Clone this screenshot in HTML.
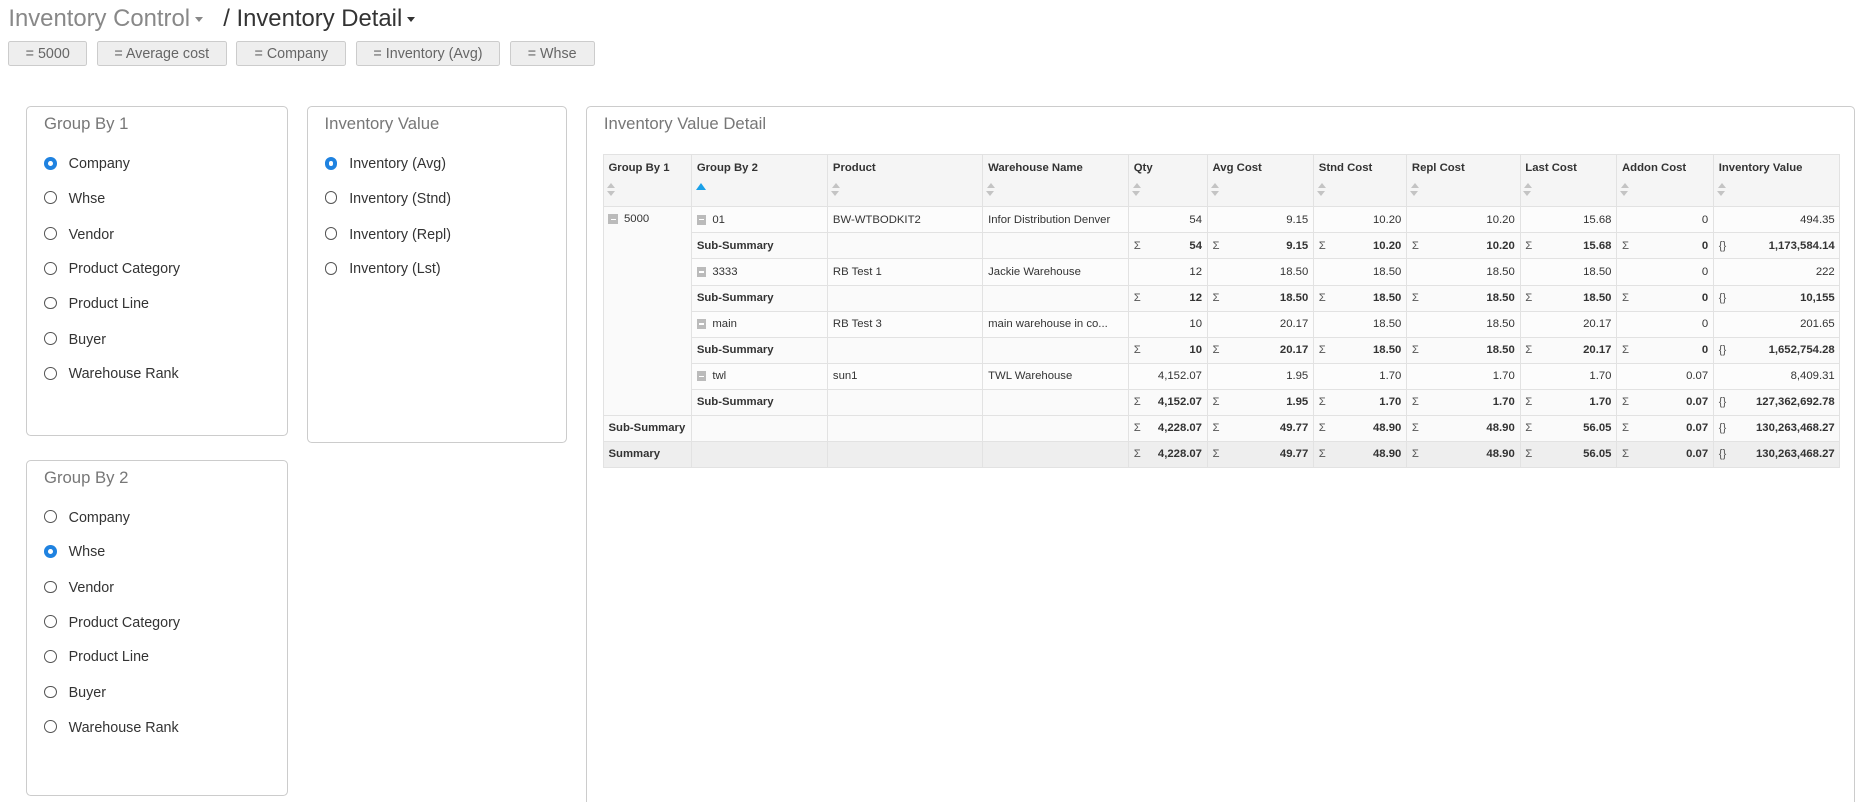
<!DOCTYPE html>
<html><head><meta charset="utf-8"><style>
html{zoom:1.19388;overflow:hidden}
body{margin:0;background:#fff;font-family:"Liberation Sans",sans-serif}
#w{width:1568px;height:672px;overflow:hidden;position:relative}
.bc{position:absolute;left:7px;top:4px;font-size:20px;color:#888;white-space:nowrap}
.bc .d{color:#333}
.car{display:inline-block;width:0;height:0;border-left:4px solid transparent;border-right:4px solid transparent;border-top:5px solid #888;vertical-align:middle;margin:0 6px 0 4px}
.bc .d .car{border-top-color:#333}
.btn{position:absolute;top:34px;height:21px;border:1px solid #ccc;background:#eee;border-radius:2px;color:#666;font-size:12px;line-height:21px;text-align:center;box-sizing:border-box}
.pan{position:absolute;border:1px solid #ccc;border-radius:4px;box-sizing:border-box;background:#fff}
.pan .t{position:absolute;left:14px;top:6px;font-size:14px;color:#777}
.r{position:absolute;left:14px;font-size:12px;color:#333;height:14px;line-height:14px;white-space:nowrap}
.r i{display:inline-block;width:9px;height:9px;border:1.5px solid #555;border-radius:50%;vertical-align:middle;margin:-2px 10px 0 0}
.r i.on{border:4px solid #1f82e0;width:4px;height:4px;background:#fff}
table{position:absolute;left:13px;top:39px;border-collapse:collapse;font-size:9.5px;color:#333;table-layout:fixed}
td,th{border:1px solid #e2e2e2;padding:0 4px;height:21px;white-space:nowrap;overflow:hidden}
th{background:#f5f5f5;text-align:left;vertical-align:top;height:44px;padding-top:6px;font-weight:bold;box-sizing:border-box;position:relative}
th .s{position:absolute;left:3px;top:24px;width:0;height:0;border-left:4px solid transparent;border-right:4px solid transparent;border-bottom:5px solid #c4c4c4}
th .s:after{content:"";position:absolute;left:-4px;top:6px;border-left:4px solid transparent;border-right:4px solid transparent;border-top:5px solid #c4c4c4}
th .s.b{border-left-width:5px;border-right-width:5px;border-bottom:6px solid #1aa0e8}th .s.b:after{display:none}
td{background:#fcfcfc}
td.n{text-align:right}
tr.sub td{font-weight:bold;background:#fafafa}
tr.sum td{font-weight:bold;background:#eee}
.g{display:inline-block;width:8px;height:8px;background:#bbb;vertical-align:top;margin:1px 5px 0 0;position:relative}
.g:after{content:"";position:absolute;left:2px;top:3.5px;width:4px;height:1px;background:#fff}
.sg{float:left;font-weight:normal;color:#555}
</style></head><body><div id="w">
<div class="bc">Inventory Control<span class="car"></span> <span class="d">&nbsp;/ Inventory Detail<span class="car"></span></span></div>
<div class="btn" style="left:7px;width:66px">= 5000</div>
<div class="btn" style="left:81px;width:109px">= Average cost</div>
<div class="btn" style="left:198px;width:92px">= Company</div>
<div class="btn" style="left:298px;width:121px">= Inventory (Avg)</div>
<div class="btn" style="left:427px;width:71px">= Whse</div>

<div class="pan" style="left:22px;top:89px;width:219px;height:276px"><div class="t">Group By 1</div>
<div class="r" style="top:41px"><i class="on"></i>Company</div>
<div class="r" style="top:70px"><i></i>Whse</div>
<div class="r" style="top:100px"><i></i>Vendor</div>
<div class="r" style="top:129px"><i></i>Product Category</div>
<div class="r" style="top:158px"><i></i>Product Line</div>
<div class="r" style="top:188px"><i></i>Buyer</div>
<div class="r" style="top:217px"><i></i>Warehouse Rank</div>
</div>
<div class="pan" style="left:22px;top:385px;width:219px;height:282px"><div class="t">Group By 2</div>
<div class="r" style="top:41px"><i></i>Company</div>
<div class="r" style="top:70px"><i class="on"></i>Whse</div>
<div class="r" style="top:100px"><i></i>Vendor</div>
<div class="r" style="top:129px"><i></i>Product Category</div>
<div class="r" style="top:158px"><i></i>Product Line</div>
<div class="r" style="top:188px"><i></i>Buyer</div>
<div class="r" style="top:217px"><i></i>Warehouse Rank</div>
</div>
<div class="pan" style="left:257px;top:89px;width:218px;height:282px"><div class="t">Inventory Value</div>
<div class="r" style="top:41px"><i class="on"></i>Inventory (Avg)</div>
<div class="r" style="top:70px"><i></i>Inventory (Stnd)</div>
<div class="r" style="top:100px"><i></i>Inventory (Repl)</div>
<div class="r" style="top:129px"><i></i>Inventory (Lst)</div>
</div>
<div class="pan" style="left:491px;top:89px;width:1063px;height:584px;border-bottom:none;border-radius:4px 4px 0 0"><div class="t">Inventory Value Detail</div>
<table>
<colgroup><col style="width:74px"><col style="width:114px"><col style="width:130px"><col style="width:122px"><col style="width:66px"><col style="width:89px"><col style="width:78px"><col style="width:95px"><col style="width:81px"><col style="width:81px"><col style="width:106px"></colgroup>
<tr><th>Group By 1<span class="s"></span></th><th>Group By 2<span class="s b"></span></th><th>Product<span class="s"></span></th><th>Warehouse Name<span class="s"></span></th><th>Qty<span class="s"></span></th><th>Avg Cost<span class="s"></span></th><th>Stnd Cost<span class="s"></span></th><th>Repl Cost<span class="s"></span></th><th>Last Cost<span class="s"></span></th><th>Addon Cost<span class="s"></span></th><th>Inventory Value<span class="s"></span></th></tr>
<tr><td rowspan="8" style="vertical-align:top;padding-top:5px;background:#fafafa"><span class="g"></span>5000</td><td><span class="g"></span>01</td><td>BW-WTBODKIT2</td><td>Infor Distribution Denver</td><td class="n">54</td><td class="n">9.15</td><td class="n">10.20</td><td class="n">10.20</td><td class="n">15.68</td><td class="n">0</td><td class="n">494.35</td></tr>
<tr class="sub"><td>Sub-Summary</td><td></td><td></td><td class="n"><span class="sg">Σ</span>54</td><td class="n"><span class="sg">Σ</span>9.15</td><td class="n"><span class="sg">Σ</span>10.20</td><td class="n"><span class="sg">Σ</span>10.20</td><td class="n"><span class="sg">Σ</span>15.68</td><td class="n"><span class="sg">Σ</span>0</td><td class="n"><span class="sg">{}</span>1,173,584.14</td></tr>
<tr><td><span class="g"></span>3333</td><td>RB Test 1</td><td>Jackie Warehouse</td><td class="n">12</td><td class="n">18.50</td><td class="n">18.50</td><td class="n">18.50</td><td class="n">18.50</td><td class="n">0</td><td class="n">222</td></tr>
<tr class="sub"><td>Sub-Summary</td><td></td><td></td><td class="n"><span class="sg">Σ</span>12</td><td class="n"><span class="sg">Σ</span>18.50</td><td class="n"><span class="sg">Σ</span>18.50</td><td class="n"><span class="sg">Σ</span>18.50</td><td class="n"><span class="sg">Σ</span>18.50</td><td class="n"><span class="sg">Σ</span>0</td><td class="n"><span class="sg">{}</span>10,155</td></tr>
<tr><td><span class="g"></span>main</td><td>RB Test 3</td><td>main warehouse in co...</td><td class="n">10</td><td class="n">20.17</td><td class="n">18.50</td><td class="n">18.50</td><td class="n">20.17</td><td class="n">0</td><td class="n">201.65</td></tr>
<tr class="sub"><td>Sub-Summary</td><td></td><td></td><td class="n"><span class="sg">Σ</span>10</td><td class="n"><span class="sg">Σ</span>20.17</td><td class="n"><span class="sg">Σ</span>18.50</td><td class="n"><span class="sg">Σ</span>18.50</td><td class="n"><span class="sg">Σ</span>20.17</td><td class="n"><span class="sg">Σ</span>0</td><td class="n"><span class="sg">{}</span>1,652,754.28</td></tr>
<tr><td><span class="g"></span>twl</td><td>sun1</td><td>TWL Warehouse</td><td class="n">4,152.07</td><td class="n">1.95</td><td class="n">1.70</td><td class="n">1.70</td><td class="n">1.70</td><td class="n">0.07</td><td class="n">8,409.31</td></tr>
<tr class="sub"><td>Sub-Summary</td><td></td><td></td><td class="n"><span class="sg">Σ</span>4,152.07</td><td class="n"><span class="sg">Σ</span>1.95</td><td class="n"><span class="sg">Σ</span>1.70</td><td class="n"><span class="sg">Σ</span>1.70</td><td class="n"><span class="sg">Σ</span>1.70</td><td class="n"><span class="sg">Σ</span>0.07</td><td class="n"><span class="sg">{}</span>127,362,692.78</td></tr>
<tr class="sub"><td>Sub-Summary</td><td></td><td></td><td></td><td class="n"><span class="sg">Σ</span>4,228.07</td><td class="n"><span class="sg">Σ</span>49.77</td><td class="n"><span class="sg">Σ</span>48.90</td><td class="n"><span class="sg">Σ</span>48.90</td><td class="n"><span class="sg">Σ</span>56.05</td><td class="n"><span class="sg">Σ</span>0.07</td><td class="n"><span class="sg">{}</span>130,263,468.27</td></tr>
<tr class="sum"><td>Summary</td><td></td><td></td><td></td><td class="n"><span class="sg">Σ</span>4,228.07</td><td class="n"><span class="sg">Σ</span>49.77</td><td class="n"><span class="sg">Σ</span>48.90</td><td class="n"><span class="sg">Σ</span>48.90</td><td class="n"><span class="sg">Σ</span>56.05</td><td class="n"><span class="sg">Σ</span>0.07</td><td class="n"><span class="sg">{}</span>130,263,468.27</td></tr>
</table>
</div>
</div></body></html>
